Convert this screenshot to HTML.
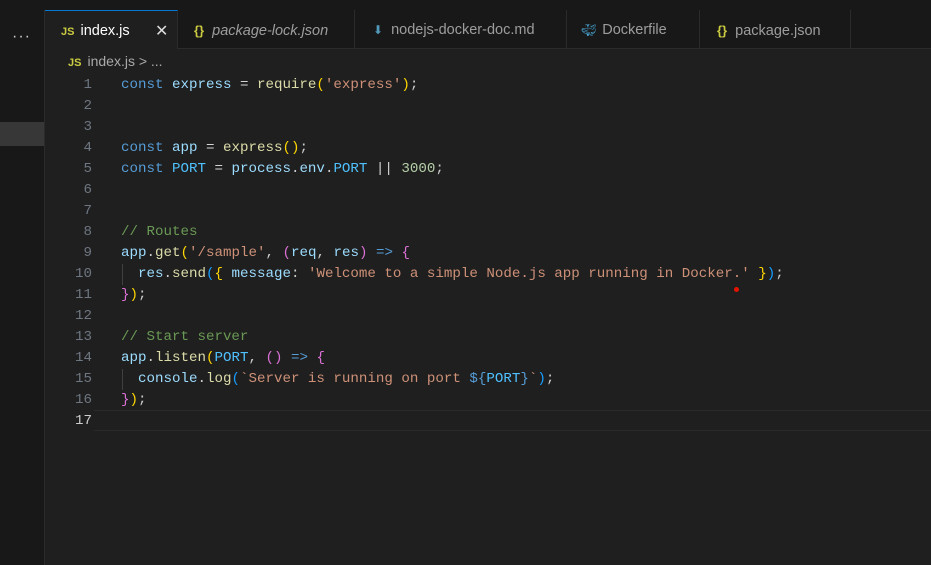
<!DOCTYPE html>
<html><head><meta charset="utf-8"><style>
body{margin:0;width:931px;height:565px;background:#1f1f1f;overflow:hidden;position:relative;font-family:"Liberation Sans",sans-serif}
.top{position:absolute;left:0;top:0;width:931px;height:10px;background:#181818}
.side{position:absolute;left:0;top:10px;width:44px;height:555px;background:#181818;border-right:1px solid #2b2b2b}
.sel{position:absolute;left:0;top:122px;width:44px;height:24px;background:#373737}
.dots{position:absolute;left:12px;top:18px;color:#ccc;font-size:16px;letter-spacing:1px}
.tabs{position:absolute;left:45px;top:10px;width:886px;height:38px;background:#181818;border-bottom:1px solid #2b2b2b}
.tab{position:absolute;top:0;height:38px;border-right:1px solid #2b2b2b;color:#9d9d9d;font-size:14.5px;line-height:41px;box-sizing:border-box}
.tab.act{background:#1f1f1f;color:#fff;border-top:1px solid #0078d4;height:39px}
.js{color:#cbcb41;font-weight:bold;font-size:11px;margin-right:6px}
.br{color:#cbcb41;font-weight:bold;margin-right:8px;font-size:13px}
.bc{position:absolute;left:68px;top:53px;color:#a9a9a9;font-size:14px}
.code{position:absolute;left:0;top:75px;font-family:"Liberation Mono",monospace;font-size:14.17px;line-height:21px;white-space:pre}
.ln{position:absolute;left:50px;width:42px;text-align:right;color:#6e7681}
.tx{position:absolute;left:121px;color:#cccccc}
.k{color:#569cd6}.v{color:#9cdcfe}.f{color:#dcdcaa}.s{color:#ce9178}.c{color:#6a9955}.n{color:#b5cea8}.o{color:#d4d4d4}.y{color:#ffd700}.p{color:#da70d6}.b{color:#179fff}.cn{color:#4fc1ff}
.cur{position:absolute;left:94px;top:410px;width:837px;height:19px;border-top:1px solid #2a2a2a;border-bottom:1px solid #2a2a2a}
.g{position:absolute;left:122px;width:1px;background:#404040}
</style></head><body>
<div class="top"></div>
<div class="side"><div class="dots">···</div></div>
<div class="sel"></div>
<div class="tabs">
<div class="tab act" style="left:0;width:133px;padding-left:16px"><span class="js">JS</span>index.js<span style="position:absolute;left:110px;top:0;font-size:16px;color:#ddd">✕</span></div>
<div class="tab" style="left:133px;width:177px;padding-left:16px;font-style:italic"><span class="br" style="font-style:normal">{}</span>package-lock.json</div>
<div class="tab" style="left:310px;width:212px;padding-left:18px"><span style="color:#519aba;margin-right:8px;font-size:12px">⬇</span>nodejs-docker-doc.md</div>
<div class="tab" style="left:522px;width:133px;padding-left:14px"><span style="color:#4aa8d8;margin-right:6px;font-size:12px">🐳︎</span>Dockerfile</div>
<div class="tab" style="left:655px;width:151px;padding-left:17px"><span class="br">{}</span>package.json</div>
</div>
<div class="bc"><span class="js">JS</span>index.js &gt; ...</div>
<div class="cur"></div>
<div class="g" style="top:264px;height:21px"></div>
<div class="g" style="top:369px;height:21px"></div>
<div class="code">
<div class="ln" style="top:0">1</div><div class="tx" style="top:0"><span class="k">const</span> <span class="v">express</span> <span class="o">=</span> <span class="f">require</span><span class="y">(</span><span class="s">'express'</span><span class="y">)</span>;</div>
<div class="ln" style="top:21px">2</div>
<div class="ln" style="top:42px">3</div>
<div class="ln" style="top:63px">4</div><div class="tx" style="top:63px"><span class="k">const</span> <span class="v">app</span> <span class="o">=</span> <span class="f">express</span><span class="y">()</span>;</div>
<div class="ln" style="top:84px">5</div><div class="tx" style="top:84px"><span class="k">const</span> <span class="cn">PORT</span> <span class="o">=</span> <span class="v">process</span>.<span class="v">env</span>.<span class="cn">PORT</span> <span class="o">||</span> <span class="n">3000</span>;</div>
<div class="ln" style="top:105px">6</div>
<div class="ln" style="top:126px">7</div>
<div class="ln" style="top:147px">8</div><div class="tx" style="top:147px"><span class="c">// Routes</span></div>
<div class="ln" style="top:168px">9</div><div class="tx" style="top:168px"><span class="v">app</span>.<span class="f">get</span><span class="y">(</span><span class="s">'/sample'</span>, <span class="p">(</span><span class="v">req</span>, <span class="v">res</span><span class="p">)</span> <span class="k">=&gt;</span> <span class="p">{</span></div>
<div class="ln" style="top:189px">10</div><div class="tx" style="top:189px">  <span class="v">res</span>.<span class="f">send</span><span class="b">(</span><span class="y">{</span> <span class="v">message</span>: <span class="s">'Welcome to a simple Node.js app running in Docker.'</span> <span class="y">}</span><span class="b">)</span>;</div>
<div class="ln" style="top:210px">11</div><div class="tx" style="top:210px"><span class="p">}</span><span class="y">)</span>;</div>
<div class="ln" style="top:231px">12</div>
<div class="ln" style="top:252px">13</div><div class="tx" style="top:252px"><span class="c">// Start server</span></div>
<div class="ln" style="top:273px">14</div><div class="tx" style="top:273px"><span class="v">app</span>.<span class="f">listen</span><span class="y">(</span><span class="cn">PORT</span>, <span class="p">()</span> <span class="k">=&gt;</span> <span class="p">{</span></div>
<div class="ln" style="top:294px">15</div><div class="tx" style="top:294px">  <span class="v">console</span>.<span class="f">log</span><span class="b">(</span><span class="s">`Server is running on port </span><span class="k">${</span><span class="cn">PORT</span><span class="k">}</span><span class="s">`</span><span class="b">)</span>;</div>
<div class="ln" style="top:315px">16</div><div class="tx" style="top:315px"><span class="p">}</span><span class="y">)</span>;</div>
<div class="ln" style="top:336px;color:#ccc">17</div>
</div>
<div style="position:absolute;left:734px;top:287px;width:5px;height:5px;border-radius:50%;background:#e51400"></div>
</body></html>
